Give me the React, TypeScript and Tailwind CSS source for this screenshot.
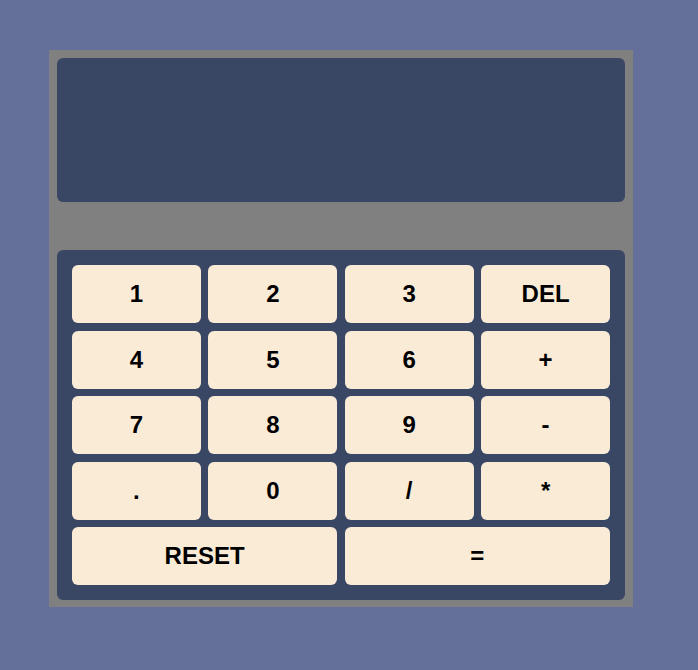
const keys = [
  "1", "2", "3", "DEL",
  "4", "5", "6", "+",
  "7", "8", "9", "-",
  ".", "0", "/", "*",
];

export default function App() {
  return (
    <div className="min-h-[670px] bg-[#647099] pt-[50px] pl-[49px]" style={{ fontFamily: '"Liberation Sans", Arial, sans-serif' }}>
      <div className="w-[584px] h-[557px] bg-[#808080] pt-2 px-2 pb-[7px] flex flex-col">
        {/* Display */}
        <div className="h-[144px] rounded-md bg-[#3a4764]" />

        {/* Keypad */}
        <div className="mt-[48px] flex-1 rounded-md bg-[#3a4764] p-[15px]">
          <div className="grid grid-cols-4 gap-x-[7.5px] gap-y-[7.5px] auto-rows-[58px]">
            {keys.map((k) => (
              <button
                key={k}
                className="rounded-md bg-[#faebd7] text-[24px] font-bold text-black flex items-center justify-center"
              >
                {k}
              </button>
            ))}
            <button className="col-span-2 rounded-md bg-[#faebd7] text-[24px] font-bold text-black flex items-center justify-center">
              RESET
            </button>
            <button className="col-span-2 rounded-md bg-[#faebd7] text-[24px] font-bold text-black flex items-center justify-center">
              =
            </button>
          </div>
        </div>
      </div>
    </div>
  );
}
